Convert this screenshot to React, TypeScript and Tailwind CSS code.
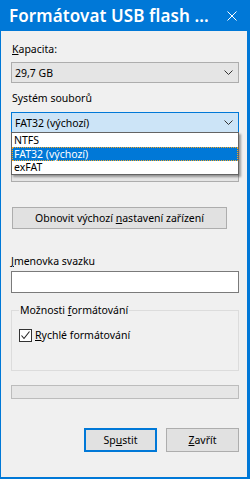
import React from "react";

const font = { fontFamily: '"Noto Sans", "Segoe UI", sans-serif' };

function Chevron() {
  return (
    <svg width="9" height="5" viewBox="0 0 9 5" className="shrink-0">
      <path d="M0.5 0.5 L4.5 4.5 L8.5 0.5" fill="none" stroke="#333" strokeWidth="1" />
    </svg>
  );
}

export default function App() {
  return (
    <div
      className="w-[250px] h-[479px] bg-[#0078d7] flex flex-col pl-[1px] pr-[3px] pb-[2px] text-[10.5px] text-black"
      style={font}
    >
      {/* Title bar */}
      <div className="h-[31px] shrink-0 flex items-center justify-between pl-[8px] pr-[10px] text-white">
        <span className="text-[17px] font-semibold leading-none tracking-[0.1px]">Formátovat USB flash ...</span>
        <svg width="10" height="10" viewBox="0 0 10 10">
          <path d="M0.5 0.5 L9.5 9.5 M9.5 0.5 L0.5 9.5" stroke="white" strokeWidth="1" />
        </svg>
      </div>
      {/* Body */}
      <div className="flex-1 bg-[#f0f0f0] flex flex-col pl-[10px] pr-[8px]">
        <div className="h-[16px] leading-[16px] mt-[10px] pl-[1px]">
          <span className="underline">K</span>apacita:
        </div>
        <div className="mt-[5px] h-[21px] border border-[#adadad] bg-[#e5e5e5] flex items-center justify-between pl-[3px] pr-[5px]">
          <span className="leading-[16px]">29,7 GB</span>
          <Chevron />
        </div>
        <div className="h-[16px] leading-[16px] mt-[7px] pl-[1px]">Systém souborů</div>
        <div className="relative mt-[6px]">
          <div className="h-[21px] border border-[#0078d7] bg-[#cce4f7] flex items-center justify-between pl-[3px] pr-[5px]">
            <span className="leading-[16px]">FAT32 (výchozí)</span>
            <Chevron />
          </div>
          {/* combo hidden under the open list */}
          <div className="mt-[28px] h-[21px] border border-[#adadad] bg-[#e5e5e5]" />
          {/* dropdown list */}
          <div className="absolute left-0 top-[20px] w-full border border-[#646464] bg-white flex flex-col shadow-[2px_2px_2px_rgba(0,0,0,0.35)] z-10">
            <div className="h-[14px] leading-[14px] pl-[2px]">NTFS</div>
            <div className="h-[14px] leading-[12px] bg-[#0078d7] text-white border border-dotted border-[#f5a623] pl-[1px]">FAT32 (výchozí)</div>
            <div className="h-[13px] leading-[13px] pl-[2px]">exFAT</div>
          </div>
        </div>
        <div className="mt-[25px] mr-[12px] ml-[1px] h-[22px] border border-[#adadad] bg-[#e1e1e1] flex items-center justify-center">
          <span className="leading-[16px]">
            Obnovit výchozí <span className="underline">n</span>astavení zařízení
          </span>
        </div>
        <div className="h-[16px] leading-[16px] mt-[24px]">
          <span className="underline">J</span>menovka svazku
        </div>
        <div className="mt-[2px] h-[22px] border border-[#7a7a7a] bg-white" />
        <div className="relative mt-[17px] h-[61px] border border-[#dcdcdc]">
          <div className="absolute left-[7px] top-[-9px] px-[1px] bg-[#f0f0f0] leading-[16px]">
            Možnosti <span className="underline">f</span>ormátování
          </div>
          <div className="flex items-center mt-[16px] ml-[7px]">
            <div className="w-[13px] h-[13px] border border-[#333] bg-white flex items-center justify-center">
              <svg width="11" height="11" viewBox="0 0 11 11">
                <path d="M1.5 5.5 L4 8.5 L9.5 1.5" fill="none" stroke="#222" strokeWidth="1.1" />
              </svg>
            </div>
            <span className="ml-[3px] leading-[16px]">
              <span className="underline">R</span>ychlé formátování
            </span>
          </div>
        </div>
        <div className="mt-[14px] h-[14px] border border-[#bcbcbc] bg-[#e6e6e6]" />
        <div className="mt-[29px] flex justify-end gap-[9px]">
          <div className="w-[73px] h-[24px] border-2 border-[#0078d7] bg-[#e1e1e1] flex items-center justify-center">
            <span className="leading-[16px]">
              Sp<span className="underline">u</span>stit
            </span>
          </div>
          <div className="w-[73px] h-[24px] border border-[#adadad] bg-[#e1e1e1] flex items-center justify-center">
            <span className="leading-[16px]">
              <span className="underline">Z</span>avřít
            </span>
          </div>
        </div>
      </div>
    </div>
  );
}
